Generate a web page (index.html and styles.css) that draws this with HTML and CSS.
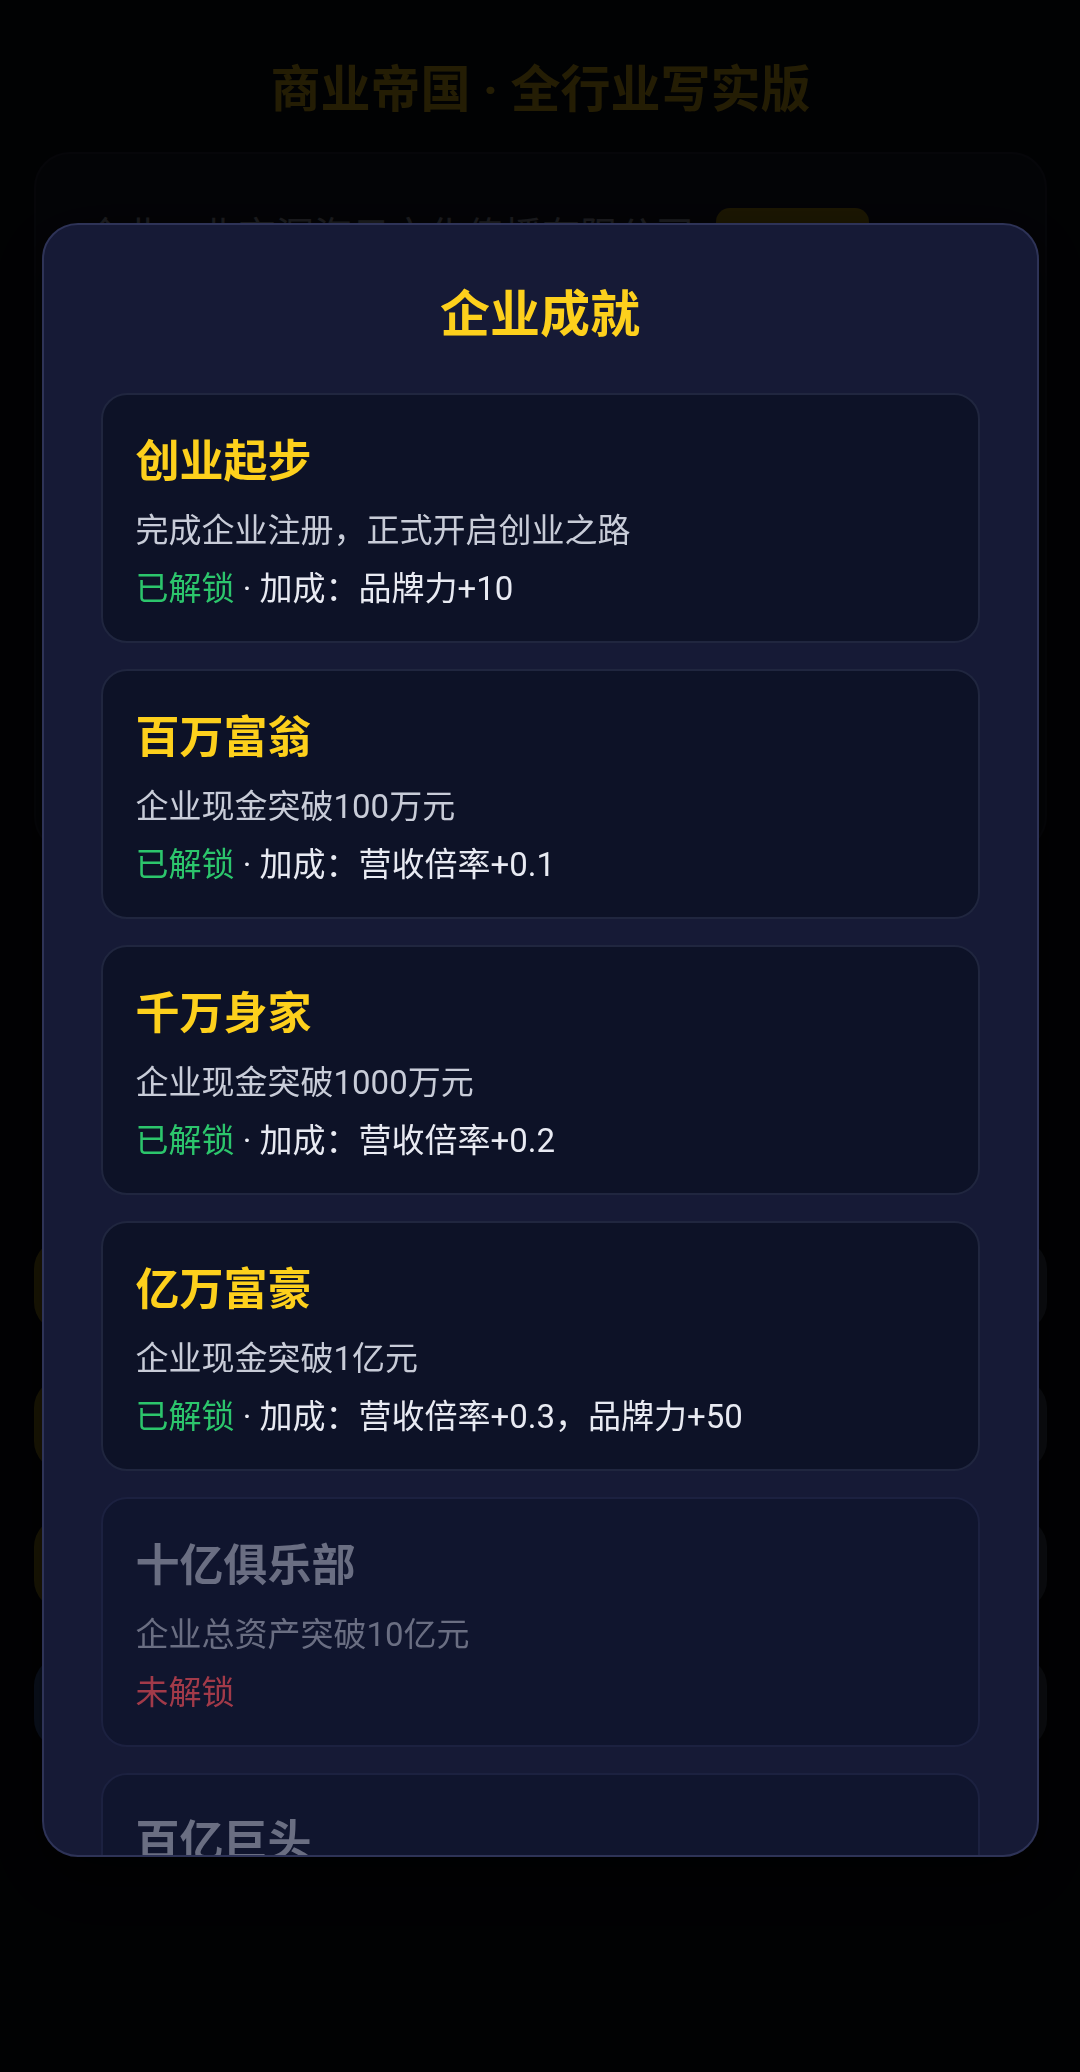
FILE: index.html
```html
<!DOCTYPE html>
<html lang="zh-CN">
<head>
<meta charset="utf-8">
<title>商业帝国 · 全行业写实版</title>
<link rel="stylesheet" href="styles.css">
</head>
<body>
<div class="page">
  <h1 class="app-title">商业帝国 · 全行业写实版</h1>
  <section class="company-card">
    <div class="company-row">
      <span class="company-name">企业：北京深海云文化传播有限公司</span>
      <span class="badge"></span>
    </div>
  </section>
  <div class="actions">
    <div class="btn gold"></div><div class="btn gray"></div>
    <div class="btn gold"></div><div class="btn gray"></div>
    <div class="btn gold"></div><div class="btn gray"></div>
    <div class="btn blue"></div><div class="btn gray"></div>
  </div>
</div>

<div class="overlay">
  <div class="modal">
    <h2 class="modal-title">企业成就</h2>
    <div class="ach-list">
      <div class="ach">
        <div class="ach-name">创业起步</div>
        <div class="ach-desc">完成企业注册，正式开启创业之路</div>
        <div class="ach-status"><span class="ok">已解锁</span> · 加成：品牌力+10</div>
      </div>
      <div class="ach">
        <div class="ach-name">百万富翁</div>
        <div class="ach-desc">企业现金突破100万元</div>
        <div class="ach-status"><span class="ok">已解锁</span> · 加成：营收倍率+0.1</div>
      </div>
      <div class="ach">
        <div class="ach-name">千万身家</div>
        <div class="ach-desc">企业现金突破1000万元</div>
        <div class="ach-status"><span class="ok">已解锁</span> · 加成：营收倍率+0.2</div>
      </div>
      <div class="ach">
        <div class="ach-name">亿万富豪</div>
        <div class="ach-desc">企业现金突破1亿元</div>
        <div class="ach-status"><span class="ok">已解锁</span> · 加成：营收倍率+0.3，品牌力+50</div>
      </div>
      <div class="ach locked">
        <div class="ach-name">十亿俱乐部</div>
        <div class="ach-desc">企业总资产突破10亿元</div>
        <div class="ach-status"><span class="no">未解锁</span></div>
      </div>
      <div class="ach locked">
        <div class="ach-name">百亿巨头</div>
        <div class="ach-desc">企业总资产突破100亿元</div>
        <div class="ach-status"><span class="no">未解锁</span></div>
      </div>
    </div>
  </div>
</div>
</body>
</html>
```

FILE: styles.css
```css
* { box-sizing: border-box; }

html, body {
  margin: 0;
  padding: 0;
  background: #0b0e1a;
  font-family: Roboto, "Noto Sans CJK SC", sans-serif;
  height: 2072px;
  overflow: hidden;
}

.page {
  padding: 60px 33px 0 34px;
}

.app-title {
  margin: 0 0 32px;
  font-size: 50px;
  line-height: 60px;
  font-weight: 700;
  text-align: center;
  color: #fccf22;
}

.company-card {
  height: 700px;
  border-radius: 36px;
  background: #1a1d2e;
  border: 2px solid #2a2e44;
  padding: 50px 50px;
}

.company-row {
  display: flex;
  align-items: center;
  gap: 22px;
}

.company-name {
  font-size: 38px;
  line-height: 64px;
  color: #c4c9da;
}

.badge {
  width: 153px;
  height: 56px;
  border-radius: 14px;
  background: #c9a314;
}

.actions {
  margin-top: 387px;
  display: grid;
  grid-template-columns: 1fr 1fr;
  column-gap: 24px;
  row-gap: 46px;
}

.btn {
  height: 93px;
  border-radius: 30px;
}
.btn.gold { background: #c8aa22; }
.btn.gray { background: #56647f; }
.btn.blue { background: #4a78d8; }

.overlay {
  position: fixed;
  inset: 0;
  background: rgba(0, 0, 0, 0.86);
  display: flex;
  justify-content: center;
  align-items: flex-start;
  padding-top: 223px;
}

.modal {
  width: 997px;
  height: 1634px;
  background: #161a36;
  border: 2px solid #2e3357;
  border-radius: 36px;
  padding: 59px 57px 40px;
  overflow: hidden;
  box-shadow: 0 20px 60px rgba(0, 0, 0, 0.6);
}

.modal-title {
  margin: 0 0 46px;
  text-align: center;
  font-size: 50px;
  line-height: 63px;
  font-weight: 700;
  color: #fdd01c;
}

.ach-list {
  display: flex;
  flex-direction: column;
  gap: 26px;
}

.ach {
  height: 250px;
  background: #0d1227;
  border: 2px solid #20263f;
  border-radius: 26px;
  padding: 36px 33px 28px;
}

.ach-name {
  font-size: 44px;
  line-height: 63px;
  font-weight: 700;
  color: #fdd01c;
  margin-bottom: 12px;
}

.ach-desc {
  font-size: 33px;
  line-height: 49px;
  color: #c8ccd8;
  margin-bottom: 9px;
}

.ach-status {
  font-size: 33px;
  line-height: 49px;
  color: #e8eaf2;
}

.ok { color: #2cc56c; }

.ach.locked {
  background: #10152e;
  border-color: #1c2140;
}
.ach.locked .ach-name { color: #6a6e82; }
.ach.locked .ach-desc { color: #6a6e82; }
.no { color: #a23a49; }
```
